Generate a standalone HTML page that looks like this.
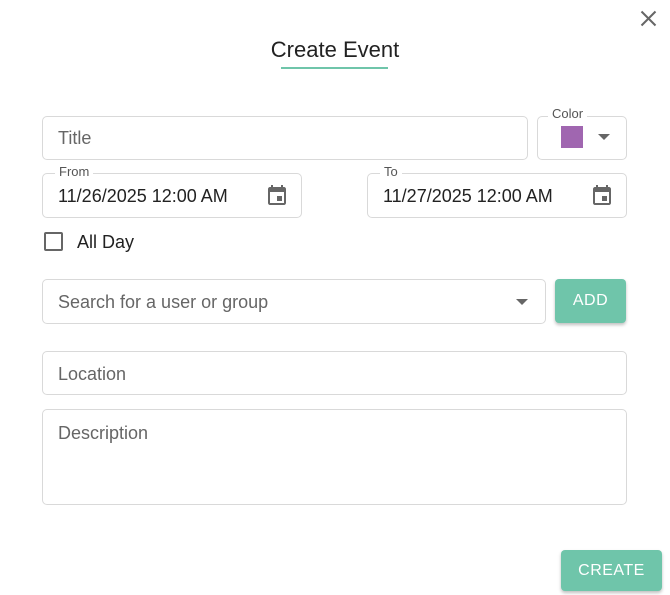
<html><head><style>
body{margin:0;width:670px;height:595px;background:#fff;font-family:"Liberation Sans",sans-serif;position:relative;overflow:hidden}
.b{position:absolute;border:1px solid #d9d9d9;border-radius:5px;box-sizing:border-box}
.t{position:absolute;font-size:18px;color:#333}
.p{color:#666}
.l{position:absolute;font-size:13px;color:#555;background:#fff;padding:0 4px}
.btn{position:absolute;background:#6fc5aa;color:#fff;border-radius:4px;box-shadow:0 2px 3px rgba(0,0,0,.25);font-size:16px;letter-spacing:.5px;text-align:center}
</style></head><body>
<svg style="position:absolute;left:640px;top:10px" width="17" height="17" viewBox="0 0 17 17"><path d="M1.5 1.5L15.5 15.5M15.5 1.5L1.5 15.5" stroke="#666" stroke-width="2"/></svg>
<div style="position:absolute;left:0;width:670px;top:37px;text-align:center;font-size:22px;color:#222">Create Event</div>
<div style="position:absolute;left:281px;top:67px;width:107px;height:2px;background:#6fc5aa"></div>

<div class="b" style="left:42px;top:116px;width:486px;height:44px"></div>
<div class="t p" style="left:58px;top:128px">Title</div>
<div class="b" style="left:537px;top:116px;width:90px;height:44px"></div>
<div class="l" style="left:548px;top:106px">Color</div>
<div style="position:absolute;left:561px;top:126px;width:22px;height:22px;background:#a066b0"></div>
<svg style="position:absolute;left:598px;top:134px" width="12" height="7"><path d="M0 0H12L6 6Z" fill="#666"/></svg>

<div class="b" style="left:42px;top:173px;width:260px;height:45px"></div>
<div class="l" style="left:55px;top:164px">From</div>
<div class="t" style="left:58px;top:186px;color:#222">11/26/2025 12:00 AM</div>
<svg style="position:absolute;left:265px;top:183px" width="24" height="24" viewBox="0 0 24 24"><path d="M19 4h-1V2h-2v2H8V2H6v2H5c-1.1 0-2 .9-2 2v14c0 1.1.9 2 2 2h14c1.1 0 2-.9 2-2V6c0-1.1-.9-2-2-2zm0 16H5V9h14v11zM12 13h5v5h-5z" fill="#666"/></svg>
<div class="b" style="left:367px;top:173px;width:260px;height:45px"></div>
<div class="l" style="left:380px;top:164px">To</div>
<div class="t" style="left:383px;top:186px;color:#222">11/27/2025 12:00 AM</div>
<svg style="position:absolute;left:590px;top:183px" width="24" height="24" viewBox="0 0 24 24"><path d="M19 4h-1V2h-2v2H8V2H6v2H5c-1.1 0-2 .9-2 2v14c0 1.1.9 2 2 2h14c1.1 0 2-.9 2-2V6c0-1.1-.9-2-2-2zm0 16H5V9h14v11zM12 13h5v5h-5z" fill="#666"/></svg>

<div style="position:absolute;left:44px;top:232px;width:15px;height:15px;border:2px solid #666;border-radius:2px"></div>
<div class="t" style="left:77px;top:232px;color:#222">All Day</div>

<div class="b" style="left:42px;top:279px;width:504px;height:45px"></div>
<div class="t p" style="left:58px;top:292px">Search for a user or group</div>
<svg style="position:absolute;left:516px;top:299px" width="12" height="6"><path d="M0 0H12L6 6Z" fill="#666"/></svg>
<div class="btn" style="left:555px;top:279px;width:71px;height:44px;line-height:44px">ADD</div>

<div class="b" style="left:42px;top:351px;width:585px;height:44px"></div>
<div class="t p" style="left:58px;top:364px">Location</div>
<div class="b" style="left:42px;top:409px;width:585px;height:96px"></div>
<div class="t p" style="left:58px;top:423px">Description</div>

<div class="btn" style="left:561px;top:550px;width:101px;height:41px;line-height:41px">CREATE</div>
</body></html>
